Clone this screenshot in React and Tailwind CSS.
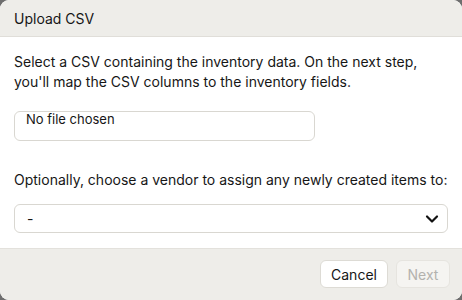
import { ChevronDown } from 'lucide-react';

export default function App() {
  return (
    <div className="w-[462px] h-[300px] bg-[#6e6e6e]" style={{ fontFamily: 'Inter, "Noto Sans", sans-serif' }}>
      <div className="w-full h-full rounded-[9px] overflow-hidden bg-white flex flex-col text-[14px] text-[#161616]">
        {/* Header */}
        <div className="h-[37px] shrink-0 bg-[#eeede9] border-b border-[#e0ded9] flex items-center px-[14px]">
          Upload CSV
        </div>

        {/* Body */}
        <div className="flex-1 px-[14px] pt-[15px] leading-[20px]">
          <p>
            Select a CSV containing the inventory data. On the next step, you'll map the CSV columns to the inventory fields.
          </p>
          <div className="mt-[19px] w-[301px] h-[30px] rounded-[6px] border border-[#d9d7d1] px-[11px] text-[13px] leading-[15px]">
            No file chosen
          </div>
          <p className="mt-[29px]">Optionally, choose a vendor to assign any newly created items to:</p>
          <div className="mt-[14px] h-[29px] rounded-[6px] border border-[#d9d7d1] flex items-center justify-between pl-[12px] pr-[5px]">
            <span>-</span>
            <ChevronDown size={20} strokeWidth={2.6} className="text-[#111]" />
          </div>
        </div>

        {/* Footer */}
        <div className="h-[52px] shrink-0 bg-[#eeede9] border-t border-[#e3e1dc] flex justify-end items-start pt-[11px] pr-[12px] gap-[8px]">
          <button className="h-[28px] w-[68px] rounded-[6px] bg-white border border-[#dddbd5] text-[#161616]">Cancel</button>
          <button className="h-[28px] w-[54px] rounded-[6px] bg-[#f5f4f1] border border-[#e6e4df] text-[#b3b2ae]">Next</button>
        </div>
      </div>
    </div>
  );
}
